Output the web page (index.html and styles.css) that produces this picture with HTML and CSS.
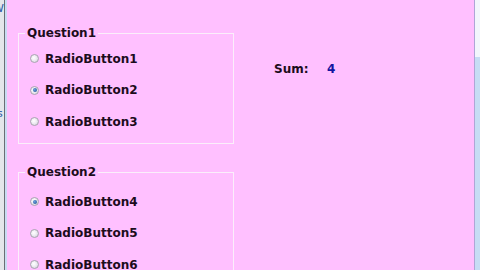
FILE: index.html
```html
<!DOCTYPE html>
<html>
<head>
<meta charset="utf-8">
<link rel="stylesheet" href="styles.css">
</head>
<body>
<div class="screen">
  <div class="side-left">
    <span class="frag frag-w">W</span>
    <span class="frag frag-s">s</span>
  </div>
  <div class="form">
    <div class="groups">
      <div class="group g1">
        <span class="legend">Question1</span>
        <div class="row"><span class="radio"></span><span class="label">RadioButton1</span></div>
        <div class="row"><span class="radio on"></span><span class="label">RadioButton2</span></div>
        <div class="row"><span class="radio"></span><span class="label">RadioButton3</span></div>
      </div>
      <div class="group g2">
        <span class="legend">Question2</span>
        <div class="row"><span class="radio on"></span><span class="label">RadioButton4</span></div>
        <div class="row"><span class="radio"></span><span class="label">RadioButton5</span></div>
        <div class="row"><span class="radio"></span><span class="label">RadioButton6</span></div>
      </div>
    </div>
    <div class="sum">
      <span class="sum-label">Sum:</span>
      <span class="sum-value">4</span>
    </div>
  </div>
  <div class="side-right">
    <div class="sr-top"></div>
  </div>
</div>
</body>
</html>
```
FILE: styles.css
```css
html, body {
  margin: 0;
  padding: 0;
  width: 480px;
  height: 270px;
  overflow: hidden;
}
.screen {
  display: flex;
  width: 480px;
  height: 270px;
  overflow: hidden;
  font-family: "DejaVu Sans", Verdana, sans-serif;
  font-weight: bold;
  color: #1c0c1c;
}
.side-left {
  width: 4px;
  background: #e4e6ea;
  border-right: 1px solid #6a6e74;
  position: relative;
  overflow: hidden;
  flex: none;
}
.frag {
  position: absolute;
  font-family: "DejaVu Sans", sans-serif;
  font-weight: normal;
  font-size: 11px;
  color: #2a5aa8;
}
.frag-w { left: -7px; top: 2px; }
.frag-s { left: -3px; top: 107px; }
.form {
  flex: 1;
  background: #ffc0ff;
  border-left: 2px solid #c8dcf2;
  display: flex;
  align-items: flex-start;
}
.groups {
  margin-left: 11px;
  display: flex;
  flex-direction: column;
}
.group {
  position: relative;
  width: 214px;
  border: 1px solid #fbeefb;
}
.g1 {
  margin-top: 33px;
  padding-top: 9px;
  height: 100px;
}
.g2 {
  margin-top: 28px;
  padding-top: 13px;
  height: 120px;
}
.legend {
  position: absolute;
  left: 6px;
  top: -8px;
  padding: 0 2px;
  background: #ffc0ff;
  font-size: 12px;
  line-height: 14px;
}
.row {
  height: 31.5px;
  display: flex;
  align-items: center;
  padding-left: 11px;
}
.radio {
  width: 9px;
  height: 9px;
  box-sizing: border-box;
  border-radius: 50%;
  border: 1px solid #a8a4b0;
  background: radial-gradient(circle at 40% 40%, #ffffff 0, #f0eef4 40%, #cfcbd6 100%);
  margin-right: 6px;
  position: relative;
  flex: none;
}
.radio.on::after {
  content: "";
  position: absolute;
  left: 1.5px;
  top: 1.5px;
  width: 4px;
  height: 4px;
  border-radius: 50%;
  background: radial-gradient(circle at 40% 40%, #6aa0e0 0, #1c4a8a 100%);
}
.label {
  font-size: 12px;
  line-height: 14px;
}
.sum {
  margin-top: 62px;
  margin-left: 40px;
  display: flex;
  font-size: 12px;
  line-height: 14px;
}
.sum-label {
  width: 53px;
}
.sum-value {
  color: #1414a0;
}
.side-right {
  width: 6px;
  flex: none;
  background: #c6dcf4;
  border-left: 1px solid #aea6d6;
  box-sizing: border-box;
}
.sr-top {
  height: 57px;
  background: #f2f6fc;
}
```
